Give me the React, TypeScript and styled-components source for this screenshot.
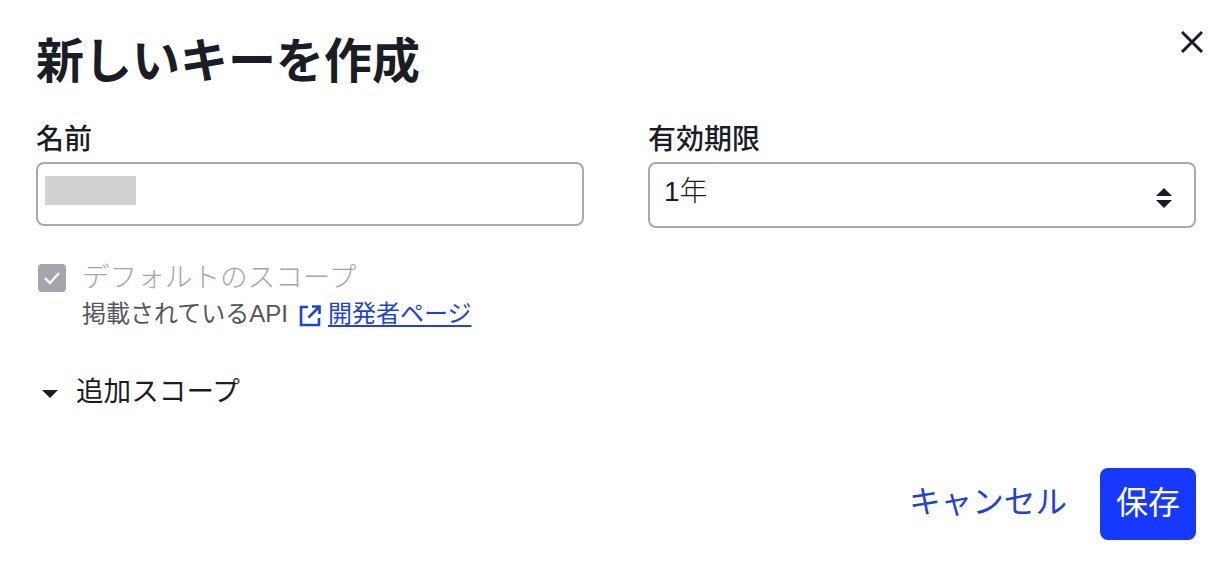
import React from "react";
import styled, { createGlobalStyle } from "styled-components";

const COLORS = {
  ink: "#1b1d26",
  border: "#a9a9ae",
  muted: "#a5a6ac",
  body: "#55565c",
  blue: "#1638ff",
  link: "#1f43d8",
};

const GlobalStyle = createGlobalStyle`
  html, body {
    margin: 0;
    background: #ffffff;
  }
  body {
    font-family: "Liberation Sans", "Noto Sans CJK JP", sans-serif;
    color: ${COLORS.ink};
  }
`;

const Dialog = styled.div`
  position: relative;
  box-sizing: border-box;
  width: 1232px;
  height: 576px;
  padding: 28px 36px 36px;
  display: flex;
  flex-direction: column;
`;

const Title = styled.h1`
  margin: 0;
  height: 68px;
  font-size: 48px;
  line-height: 68px;
  font-weight: 700;
  color: ${COLORS.ink};
`;

const CloseButton = styled.button`
  position: absolute;
  top: 28px;
  right: 26px;
  width: 28px;
  height: 28px;
  padding: 0;
  border: 0;
  background: none;
  color: ${COLORS.ink};
`;

const Fields = styled.div`
  display: grid;
  grid-template-columns: 548px 548px;
  column-gap: 64px;
  margin-top: 24px;
  align-items: start;
`;

const Field = styled.div`
  display: flex;
  flex-direction: column;
  gap: 2px;
`;

const FieldLabel = styled.label`
  font-size: 28px;
  line-height: 40px;
  font-weight: 500;
`;

const InputBox = styled.div<{ $height: number }>`
  box-sizing: border-box;
  height: ${(p) => p.$height}px;
  border: 2px solid ${COLORS.border};
  border-radius: 8px;
  display: flex;
  align-items: flex-start;
  justify-content: space-between;
  padding: 12px 22px 0 7px;
`;

const Redacted = styled.div`
  width: 91px;
  height: 29px;
  background: #d1d1d1;
`;

const SelectValue = styled.span`
  font-size: 28px;
  line-height: 34px;
  font-weight: 300;
  margin: -1px 0 0 7px;
`;

const SelectArrows = styled.svg`
  width: 16px;
  height: 20px;
  margin-top: 12px;
`;

const ScopeRow = styled.div`
  display: flex;
  gap: 16px;
  margin-top: 32px;
  margin-left: 2px;
`;

const CheckBox = styled.div`
  width: 28px;
  height: 28px;
  margin-top: 4px;
  border-radius: 4px;
  background: ${COLORS.muted};
  display: flex;
  align-items: center;
  justify-content: center;
`;

const ScopeText = styled.div`
  display: flex;
  flex-direction: column;
`;

const ScopeName = styled.div`
  font-size: 27.6px;
  line-height: 36px;
  font-weight: 300;
  color: ${COLORS.muted};
`;

const ScopeNote = styled.div`
  display: flex;
  align-items: center;
  font-size: 24px;
  line-height: 36px;
  font-weight: 400;
  color: ${COLORS.body};
`;

const LinkIcon = styled.svg`
  width: 24px;
  height: 24px;
  margin: 4px 6px 0 10px;
`;

const DocLink = styled.a`
  color: ${COLORS.link};
  text-decoration: underline;
  text-underline-offset: 3px;
  text-decoration-thickness: 2px;
`;

const Disclosure = styled.div`
  display: flex;
  align-items: center;
  gap: 18px;
  margin-top: 40px;
  margin-left: 6px;
  font-size: 27.6px;
  line-height: 40px;
  font-weight: 400;
`;

const Caret = styled.svg`
  width: 16px;
  height: 10px;
  margin-top: 4px;
`;

const Footer = styled.div`
  margin-top: auto;
  display: flex;
  justify-content: flex-end;
  align-items: center;
  gap: 33px;
`;

const CancelButton = styled.button`
  padding: 0 0 4px;
  border: 0;
  background: none;
  font-family: inherit;
  font-size: 31.6px;
  line-height: 44px;
  font-weight: 400;
  color: ${COLORS.link};
`;

const SaveButton = styled.button`
  width: 96px;
  height: 72px;
  padding: 0 0 8px;
  border: 0;
  border-radius: 8px;
  background: ${COLORS.blue};
  font-family: inherit;
  font-size: 32px;
  font-weight: 400;
  color: #ffffff;
`;

export default function App() {
  return (
    <Dialog>
      <GlobalStyle />
      <Title>新しいキーを作成</Title>
      <CloseButton aria-label="閉じる">
        <svg width="28" height="28" viewBox="0 0 28 28" fill="none" stroke="currentColor" strokeWidth="3">
          <path d="M4 4l20 20M24 4L4 24" />
        </svg>
      </CloseButton>
      <Fields>
        <Field>
          <FieldLabel>名前</FieldLabel>
          <InputBox $height={64}>
            <Redacted />
          </InputBox>
        </Field>
        <Field>
          <FieldLabel>有効期限</FieldLabel>
          <InputBox $height={66}>
            <SelectValue>1年</SelectValue>
            <SelectArrows viewBox="0 0 16 20" fill={COLORS.ink}>
              <path d="M8 0l8 8H0zM0 12h16l-8 8z" />
            </SelectArrows>
          </InputBox>
        </Field>
      </Fields>
      <ScopeRow>
        <CheckBox>
          <svg width="18" height="14" viewBox="0 0 18 14" fill="none" stroke="#ffffff" strokeWidth="2.4">
            <path d="M2 7l5 5 9-10" />
          </svg>
        </CheckBox>
        <ScopeText>
          <ScopeName>デフォルトのスコープ</ScopeName>
          <ScopeNote>
            掲載されているAPI
            <LinkIcon viewBox="0 0 24 24" fill="none" stroke={COLORS.link} strokeWidth="2.6">
              <path d="M10 3H3v18h18v-7M14 2.5h7.5V10M21 3L10.5 13.5" />
            </LinkIcon>
            <DocLink href="#">開発者ページ</DocLink>
          </ScopeNote>
        </ScopeText>
      </ScopeRow>
      <Disclosure>
        <Caret viewBox="0 0 16 10" fill={COLORS.ink}>
          <path d="M0 1h16l-8 8z" />
        </Caret>
        追加スコープ
      </Disclosure>
      <Footer>
        <CancelButton>キャンセル</CancelButton>
        <SaveButton>保存</SaveButton>
      </Footer>
    </Dialog>
  );
}
